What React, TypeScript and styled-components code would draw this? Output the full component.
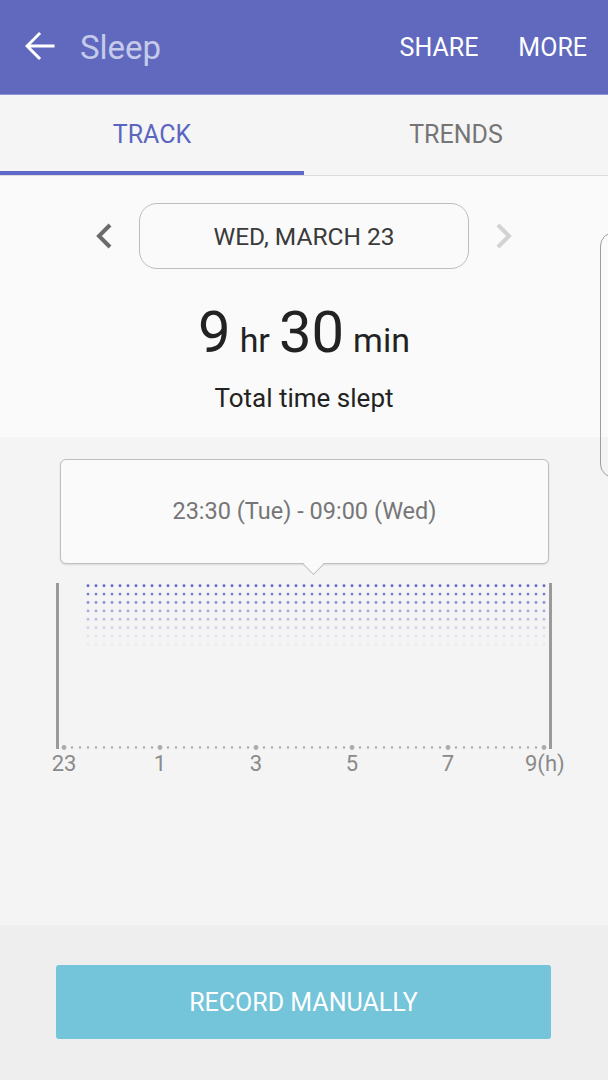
import styled, {createGlobalStyle} from "styled-components";

const GlobalStyle = createGlobalStyle`
    html, body {
        margin: 0;
        padding: 0;
        background: #eeeeee;
    }
    body {
        font-family: Roboto, "Noto Sans", "Liberation Sans", sans-serif;
        -webkit-font-smoothing: antialiased;
    }
`

const hours = ["23", "1", "3", "5", "7", "9(h)"]

// fading rows of dots, strongest at the top
const dotRows = ["#666cc7", "#777dcd", "#8e93d5", "#a6aade", "#bec1e5", "#d2d4eb", "#e2e3ef", "#eaeaf1"]

const BackArrow = () => (
    <svg width="30" height="30" viewBox="0 0 30 30">
        <path d="M28 15H3M14 3L2 15L14 27" fill="none" stroke="#fff" strokeWidth="3" strokeLinecap="square"/>
    </svg>
)

const Chevron = ({dir, color}: { dir: "left" | "right"; color: string }) => (
    <svg width="18" height="28" viewBox="0 0 18 28">
        <path d={dir === "left" ? "M15 3L4 14L15 25" : "M3 3L14 14L3 25"} fill="none" stroke={color}
              strokeWidth="4"/>
    </svg>
)

const SleepChart = () => {
    const cols = Array.from({length: 58}, (_, i) => 88 + i * 8)
    const axisDots = Array.from({length: 61}, (_, i) => 64 + i * 8)
    return (
        <svg width="608" height="210" viewBox="0 0 608 210">
            {dotRows.map((c, r) =>
                cols.map(x => <circle key={`${r}-${x}`} cx={x} cy={10.7 + r * 8.4} r="1.45" fill={c}/>)
            )}
            <rect x="56" y="8" width="3" height="166" fill="#9a9a9a"/>
            <rect x="549" y="8" width="3" height="166" fill="#9a9a9a"/>
            {axisDots.map((x, i) => (
                <circle key={x} cx={x} cy="172.5" r={i % 12 === 0 ? 2.4 : 1.2} fill="#ababab"/>
            ))}
            {hours.map((h, i) => (
                <text key={h} x={i === 5 ? 525 : 64 + i * 96} y="196" fontSize="22"
                      fontFamily="Roboto, sans-serif" fill="#8a8a8a"
                      textAnchor={i === 5 ? "start" : "middle"}>{h}</text>
            ))}
        </svg>
    )
}

export default function App() {
    return (
        <Page>
            <GlobalStyle/>
            <Header>
                <BackButton><BackArrow/></BackButton>
                <Title>Sleep</Title>
                <Action>SHARE</Action>
                <Action>MORE</Action>
            </Header>

            <Tabs>
                <Tab $active>TRACK</Tab>
                <Tab>TRENDS</Tab>
            </Tabs>

            <Summary>
                <DateRow>
                    <Chevron dir="left" color="#6b6b6b"/>
                    <DatePill>WED, MARCH 23</DatePill>
                    <Chevron dir="right" color="#d2d2d2"/>
                </DateRow>
                <Duration>
                    <Big>9</Big><Unit>hr</Unit><Big>30</Big><Unit>min</Unit>
                </Duration>
                <Caption>Total time slept</Caption>
            </Summary>

            <ChartArea>
                <Bubble>23:30 (Tue) - 09:00 (Wed)</Bubble>
                <ChartBox>
                    <SleepChart/>
                </ChartBox>
            </ChartArea>

            <Footer>
                <RecordButton>RECORD MANUALLY</RecordButton>
            </Footer>

            <PeekCard/>
        </Page>
    );
}

const Page = styled.div`
    position: relative;
    width: 608px;
    height: 1080px;
    overflow: hidden;
    display: flex;
    flex-direction: column;
    background: #eeeeee;
`

const Header = styled.header`
    height: 94px;
    flex-shrink: 0;
    display: flex;
    align-items: center;
    gap: 40px;
    padding: 0 21px 0 25px;
    background: #6069bd;
    box-sizing: border-box;
`

const BackButton = styled.div`
    display: flex;
    align-items: center;
    margin-top: -2px;
`

const Title = styled.div`
    flex: 1;
    margin-left: -15px;
    font-size: 33px;
    color: #c5c9ea;
`

const Action = styled.div`
    font-size: 25px;
    color: #ffffff;
`

const Tabs = styled.nav`
    display: flex;
    height: 82px;
    flex-shrink: 0;
    background: #f5f5f5;
    border-top: 1px solid #8d93cf;
    border-bottom: 1px solid #dcdcdc;
    box-sizing: border-box;
`

const Tab = styled.div<{ $active?: boolean }>`
    flex: 1;
    display: flex;
    align-items: center;
    justify-content: center;
    padding-top: 3px;
    font-size: 25px;
    color: ${p => p.$active ? "#5c66c0" : "#757575"};
    border-bottom: 4px solid ${p => p.$active ? "#6069c9" : "transparent"};
`

const Summary = styled.section`
    height: 261px;
    flex-shrink: 0;
    background: #fafafa;
    display: flex;
    flex-direction: column;
    align-items: center;
    padding-top: 27px;
    box-sizing: border-box;
`

const DateRow = styled.div`
    display: flex;
    align-items: center;
    gap: 26px;
`

const DatePill = styled.div`
    width: 330px;
    height: 66px;
    box-sizing: border-box;
    border: 1px solid #bdbdbd;
    border-radius: 18px;
    display: flex;
    align-items: center;
    justify-content: center;
    font-size: 24.5px;
    color: #3a3a3a;
`

const Duration = styled.div`
    margin-top: 31px;
    display: flex;
    align-items: baseline;
    gap: 9px;
    line-height: 64px;
    color: #222;
`

const Big = styled.span`
    font-size: 58px;
`

const Unit = styled.span`
    font-size: 34px;
`

const Caption = styled.div`
    margin-top: 11px;
    font-size: 26px;
    line-height: 30px;
    color: #222;
`

const ChartArea = styled.section`
    height: 488px;
    flex-shrink: 0;
    background: #f4f4f4;
    padding-top: 22px;
    box-sizing: border-box;
`

const Bubble = styled.div`
    position: relative;
    margin: 0 59px 0 60px;
    height: 105px;
    box-sizing: border-box;
    border: 1px solid #bfbfbf;
    border-radius: 6px;
    background: #fafafa;
    box-shadow: 0 1px 2px rgba(0, 0, 0, 0.12);
    display: flex;
    align-items: center;
    justify-content: center;
    padding-bottom: 2px;
    font-size: 23.5px;
    color: #767676;

    &::after {
        content: "";
        position: absolute;
        left: 245px;
        bottom: -9px;
        width: 14px;
        height: 14px;
        background: #fafafa;
        border-right: 1px solid #bfbfbf;
        border-bottom: 1px solid #bfbfbf;
        transform: rotate(45deg);
    }
`

const ChartBox = styled.div`
    margin-top: 11px;
    display: flex;
`

const Footer = styled.footer`
    flex: 1;
    background: #eeeeee;
    padding: 40px 57px 0 56px;
`

const RecordButton = styled.div`
    height: 74px;
    border-radius: 3px;
    background: #74c4da;
    display: flex;
    align-items: center;
    justify-content: center;
    font-size: 25px;
    color: #ffffff;
`

// edge of the next page's card peeking in from the right
const PeekCard = styled.div`
    position: absolute;
    left: 600px;
    top: 232px;
    width: 40px;
    height: 246px;
    border: 1px solid #9e9e9e;
    border-radius: 14px;
    box-sizing: border-box;
`
